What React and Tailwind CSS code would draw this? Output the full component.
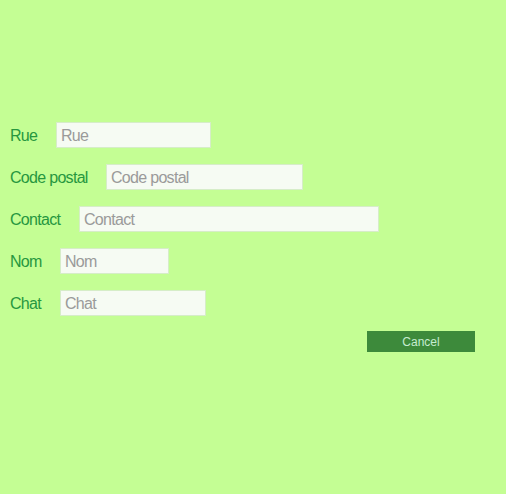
const FIELDS = [
  { label: 'Rue', labelW: 'w-[26px]', width: 'w-[155px]' },
  { label: 'Code postal', labelW: 'w-[76px]', width: 'w-[197px]' },
  { label: 'Contact', labelW: 'w-[49px]', width: 'w-[300px]' },
  { label: 'Nom', labelW: 'w-[30px]', width: 'w-[109px]' },
  { label: 'Chat', labelW: 'w-[30px]', width: 'w-[146px]' },
];

export default function App() {
  return (
    <div className="min-h-[494px] w-full bg-[#c4fe94] pt-[122px] font-['Liberation_Sans',Arial,sans-serif]">
      <div className="flex flex-col gap-4 pl-[10px]">
        {FIELDS.map(f => (
          <div key={f.label} className="flex h-[26px] items-center">
            <label className={`${f.labelW} mr-[20px] pt-[2px] whitespace-nowrap text-[16px] tracking-[-0.7px] text-[#27973f]`}>{f.label}</label>
            <input
              type="text"
              placeholder={f.label}
              className={`${f.width} h-[26px] border border-[#d6edc8] bg-[#f6fbf3] px-[4px] pt-[2px] text-[16px] tracking-[-0.7px] text-gray-700 outline-none placeholder:text-[#9a9a9a]`}
            />
          </div>
        ))}
      </div>
      <div className="mt-[15px] flex justify-end pr-[31px]">
        <button className="h-[21px] w-[108px] bg-[#3d8a3b] text-[12px] text-[#c6ecd0]">Cancel</button>
      </div>
    </div>
  );
}
